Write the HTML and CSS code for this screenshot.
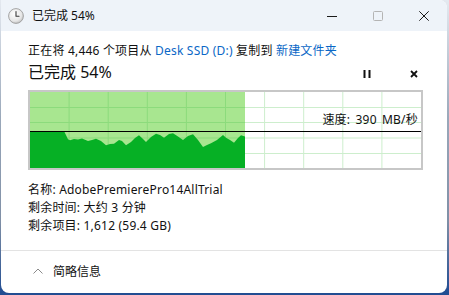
FILE: index.html
```html
<!DOCTYPE html>
<html lang="zh-CN">
<head>
<meta charset="utf-8">
<title>已完成 54%</title>
<link rel="stylesheet" href="styles.css">
</head>
<body>
<div class="window">
  <div class="titlebar">
    <svg class="app-icon" width="16" height="16" viewBox="0 0 16 16">
      <defs>
        <radialGradient id="cg" cx="0.4" cy="0.35" r="0.7">
          <stop offset="0" stop-color="#ffffff"/>
          <stop offset="0.7" stop-color="#e6e6e6"/>
          <stop offset="1" stop-color="#bdbdbd"/>
        </radialGradient>
      </defs>
      <circle cx="8" cy="8" r="7.4" fill="url(#cg)" stroke="#9c9c9c" stroke-width="0.9"/>
      <path d="M8 3.6V8.3H11" fill="none" stroke="#3a3a3a" stroke-width="1.1" stroke-linecap="round" stroke-linejoin="round"/>
    </svg>
    <span class="title">已完成 54%</span>
    <div class="caption">
      <span class="cap"><svg width="10" height="10" viewBox="0 0 10 10"><path d="M0 5.5H10" stroke="#1a1a1a" stroke-width="1"/></svg></span>
      <span class="cap"><svg width="10" height="10" viewBox="0 0 10 10"><rect x="0.5" y="0.5" width="9" height="9" rx="1" fill="none" stroke="#b4b4b4" stroke-width="1"/></svg></span>
      <span class="cap"><svg width="10" height="10" viewBox="0 0 10 10"><path d="M0.3 0.3L9.7 9.7M9.7 0.3L0.3 9.7" stroke="#1a1a1a" stroke-width="1"/></svg></span>
    </div>
  </div>

  <div class="content">
    <div class="line1">正在将 4,446 个项目从 <span class="link">Desk SSD (D:)</span> 复制到 <span class="link">新建文件夹</span></div>
    <div class="status-row">
      <span class="big">已完成 54%</span>
      <div class="ctrls">
        <span class="ctrl"><svg width="8" height="8" viewBox="0 0 8 8"><rect x="0.5" y="0" width="2" height="8" fill="#111"/><rect x="5.5" y="0" width="2" height="8" fill="#111"/></svg></span>
        <span class="ctrl"><svg width="8" height="8" viewBox="0 0 8 8"><path d="M1 1L7 7M7 1L1 7" stroke="#111" stroke-width="1.8"/></svg></span>
      </div>
    </div>
    <div class="graph">
      <svg width="391" height="76" viewBox="0 0 391 76">
        <defs>
          <clipPath id="done"><rect x="0" y="0" width="215" height="76"/></clipPath>
        </defs>
        <g stroke="#cdeecd" stroke-width="1">
          <path d="M39.1 0V76M78.2 0V76M117.3 0V76M156.4 0V76M195.5 0V76M234.6 0V76M273.7 0V76M312.8 0V76M351.9 0V76"/>
          <path d="M0 15.5H391M0 30.5H391M0 46H391M0 61.5H391"/>
        </g>
        <rect x="0" y="0" width="215" height="76" fill="#a8e690"/>
        <g stroke="#8cdb7c" stroke-width="1" clip-path="url(#done)">
          <path d="M39.1 0V76M78.2 0V76M117.3 0V76M156.4 0V76M195.5 0V76"/>
          <path d="M0 15.5H391M0 30.5H391M0 46H391M0 61.5H391"/>
        </g>
        <path fill="#06b025" d="M0 39L34 39L38 47.3L40 48.3L44 47L48 47.5L52 46.5L58 49L62 48L66 46.7L71 49L76 53.3L80 52L84 51.7L89 48L92 49L96 53.3L101 50L105 46L109 43.3L113 47L116 50L121 45L126 41.7L130 43L134 45.7L139 42L143 41.3L148 44.5L153 48L158 44L163 42.3L168 48L173 55L177 53L181 51.3L187 48L193 43L196 45.7L200 48L204 50.7L208 46L211 43.3L215 44.5L215 76L0 76Z"/>
        <path d="M0 39.5H391" stroke="#000" stroke-width="1.2"/>
      </svg>
      <span class="speed">速度: 390 MB/秒</span>
    </div>
    <div class="info">
      <div>名称: AdobePremierePro14AllTrial</div>
      <div>剩余时间: 大约 3 分钟</div>
      <div>剩余项目: 1,612 (59.4 GB)</div>
    </div>
  </div>

  <div class="footer">
    <svg class="chev" width="10" height="6" viewBox="0 0 10 6"><path d="M0.5 5.5L5 1L9.5 5.5" fill="none" stroke="#8a8a8a" stroke-width="1"/></svg>
    <span>简略信息</span>
  </div>
</div>
</body>
</html>
```

FILE: styles.css
```css
html, body {
  margin: 0;
  padding: 0;
}
body {
  width: 449px;
  height: 295px;
  overflow: hidden;
  background: linear-gradient(to bottom, #e4e9f0 0%, #9aa8ba 40%, #7f8fa6 75%, #224d92 99%);
  font-family: "Noto Sans", "Noto Sans CJK SC", sans-serif;
  color: #111;
}
.window {
  margin-left: 1px;
  width: 446px;
  height: 293px;
  background: #fff;
  border-radius: 0 8px 8px 8px;
  overflow: hidden;
  display: flex;
  flex-direction: column;
}
.titlebar {
  height: 31px;
  flex: none;
  background: #eef3f9;
  display: flex;
  align-items: center;
  padding-left: 7px;
}
.app-icon {
  flex: none;
  display: block;
}
.title {
  margin-left: 8px;
  font-size: 12px;
  line-height: 16px;
  color: #111;
}
.caption {
  margin-left: auto;
  display: flex;
  height: 31px;
}
.cap {
  width: 46px;
  height: 31px;
  display: flex;
  align-items: center;
  justify-content: center;
}
.cap svg { display: block; }

.content {
  flex: 1;
  padding: 11px 25px 0 27px;
}
.line1 {
  font-size: 12px;
  line-height: 17px;
  letter-spacing: 0.2px;
  white-space: nowrap;
}
.link {
  color: #0a67c6;
}
.status-row {
  display: flex;
  align-items: center;
  height: 24px;
  margin-top: 1px;
}
.big {
  font-size: 16px;
  line-height: 22px;
}
.ctrls {
  margin-left: auto;
  display: flex;
  gap: 31px;
  padding-top: 4px;
}
.ctrl {
  width: 16px;
  height: 12px;
  display: flex;
  align-items: center;
  justify-content: center;
}
.ctrl svg { display: block; }

.graph {
  position: relative;
  margin-top: 6px;
  width: 391px;
  height: 76px;
  border: 2px solid #c7c7c7;
}
.graph svg {
  display: block;
}
.speed {
  position: absolute;
  right: 3px;
  top: 20px;
  font-size: 12px;
  line-height: 16px;
  letter-spacing: 0.2px;
  word-spacing: 2px;
  color: #111;
}
.info {
  margin-top: 11px;
  font-size: 12px;
  line-height: 17.8px;
  letter-spacing: 0.2px;
}
.footer {
  flex: none;
  height: 42px;
  border-top: 1px solid #e3e3e3;
  display: flex;
  align-items: center;
  padding-left: 32px;
  font-size: 12px;
  line-height: 16px;
}
.chev {
  display: block;
  margin-right: 10px;
  margin-top: -2px;
}
```
